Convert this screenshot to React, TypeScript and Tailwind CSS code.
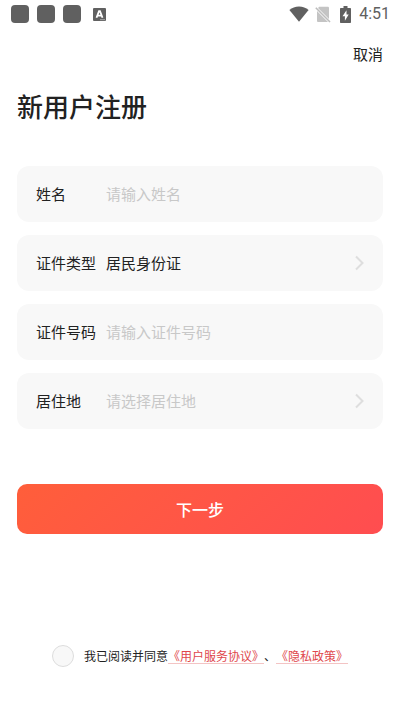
import { useState } from 'react';
import type { ReactNode } from 'react';

const idTypes = ['居民身份证', '护照', '港澳居民来往内地通行证'];
const regions = ['北京市', '上海市', '广东省', '浙江省'];

const controlClass =
    'min-w-0 flex-1 appearance-none bg-transparent text-[15px] text-[#222222] outline-none placeholder:text-[#c8c8c8]';

const linkClass = 'text-[#e0474c] underline decoration-[#f3c4c4] decoration-1 underline-offset-2';

const StatusBar = () => (
    <div className="flex h-7 items-center justify-between pr-[10px] pl-[11px] text-[#606060]">
        <div className="flex items-center gap-2">
            <span className="size-[18px] rounded-[4px] bg-current"></span>
            <span className="size-[18px] rounded-[4px] bg-current"></span>
            <span className="size-[18px] rounded-[4px] bg-current"></span>
            <svg className="ml-1 size-[13px]" viewBox="0 0 13 13" aria-hidden="true">
                <rect width="13" height="13" rx="1" fill="currentColor" />
                <path d="M3.5 9.8 6 3.2h1l2.5 6.6M4.6 7.6h3.8" fill="none" stroke="#fff" strokeWidth="1.8" />
                <path d="M7 11.7h5" stroke="#aaa" strokeWidth="1" />
            </svg>
        </div>
        <div className="flex items-center">
            <svg className="h-4 w-5" viewBox="0 0 20 16" aria-hidden="true">
                <path d="M10 15.8.4 4.1C3 1.7 6.3.4 10 .4s7 1.300 9.600 3.700z" fill="currentColor" />
            </svg>
            <svg className="ml-[6px] h-[17px] w-4" viewBox="0 0 16 17" aria-hidden="true">
                <path d="M4.200.8h8.500c.8 0 1.300.5 1.300 1.300v11L3 2zM2 5l11 11H3.300c-.8 0-1.300-.5-1.300-1.300z" fill="#c4c4c4" />
                <path d="m.8 1.800 14.200 14.200" stroke="#bcbcbc" strokeWidth="1.600" />
            </svg>
            <svg className="ml-[9px] h-[17px] w-[11px]" viewBox="0 0 11 17" aria-hidden="true">
                <path d="M3.500 0h4v2H10c.6 0 1 .4 1 1v13c0 .6-.4 1-1 1H1c-.6 0-1-.4-1-1V3c0-.6.4-1 1-1h2.500z" fill="currentColor" />
                <path d="M6.500 4.200 2.500 10.200h2.400v4.600l3.800-6.400H6.500z" fill="#fff" />
            </svg>
            <span className="ml-2 font-[Roboto,sans-serif] text-base leading-none">4:51</span>
        </div>
    </div>
);

const Field = ({ id, label, children }: { id: string; label: string; children: ReactNode }) => (
    <div className="flex h-14 items-center rounded-xl bg-[#f8f8f8] px-[19px]">
        <label htmlFor={id} className="w-[70px] shrink-0 text-[15px] text-[#222222]">
            {label}
        </label>
        {children}
    </div>
);

const Arrow = () => (
    <svg className="pointer-events-none h-4 w-[9px] shrink-0" viewBox="0 0 9 16" aria-hidden="true">
        <path d="m1 1.500 6.500 6.500L1 14.500" fill="none" stroke="#dedede" strokeWidth="2" />
    </svg>
);

const App = () => {
    const [idType, setIdType] = useState(idTypes[0]);
    const [region, setRegion] = useState('');

    return (
        <div className="min-h-screen bg-white font-['Noto_Sans_CJK_SC',sans-serif] text-[#222222]">
            <StatusBar />
            <div className="flex justify-end px-[17px] pt-[14px]">
                <button type="button" className="text-[15px] leading-6">取消</button>
            </div>
            <main className="px-[17px] pt-5">
                <h1 className="text-[26px] leading-10 font-medium">新用户注册</h1>
                <form onSubmit={(e) => e.preventDefault()}>
                    <div className="mt-10 flex flex-col gap-[13px]">
                        <Field id="name" label="姓名">
                            <input id="name" type="text" placeholder="请输入姓名" className={controlClass} />
                        </Field>
                        <Field id="id-type" label="证件类型">
                            <select id="id-type" value={idType} onChange={(e) => setIdType(e.target.value)} className={controlClass}>
                                {idTypes.map((type) => (
                                    <option key={type}>{type}</option>
                                ))}
                            </select>
                            <Arrow />
                        </Field>
                        <Field id="id-number" label="证件号码">
                            <input id="id-number" type="text" placeholder="请输入证件号码" className={controlClass} />
                        </Field>
                        <Field id="region" label="居住地">
                            <select
                                id="region"
                                required
                                value={region}
                                onChange={(e) => setRegion(e.target.value)}
                                className={`${controlClass} invalid:text-[#c8c8c8]`}
                            >
                                <option value="" disabled>请选择居住地</option>
                                {regions.map((name) => (
                                    <option key={name}>{name}</option>
                                ))}
                            </select>
                            <Arrow />
                        </Field>
                    </div>
                    <button
                        type="submit"
                        className="mt-[55px] h-[50px] w-full rounded-[10px] bg-linear-135 from-[#ff5e3a] to-[#ff4d50] text-base font-medium text-white"
                    >
                        下一步
                    </button>
                    <div className="mt-[111px] flex items-center justify-center text-xs">
                        <input
                            id="agree"
                            type="checkbox"
                            className="mr-[10px] size-[22px] shrink-0 appearance-none rounded-full border border-[#dddddd] bg-[#f8f8f8] checked:bg-[#ff4d50]"
                        />
                        <p className="[text-spacing-trim:space-all]">
                            <label htmlFor="agree">我已阅读并同意</label>
                            <a href="#terms" className={linkClass}>《用户服务协议》</a>
                            、
                            <a href="#privacy" className={linkClass}>《隐私政策》</a>
                        </p>
                    </div>
                </form>
            </main>
        </div>
    );
};

export default App;
